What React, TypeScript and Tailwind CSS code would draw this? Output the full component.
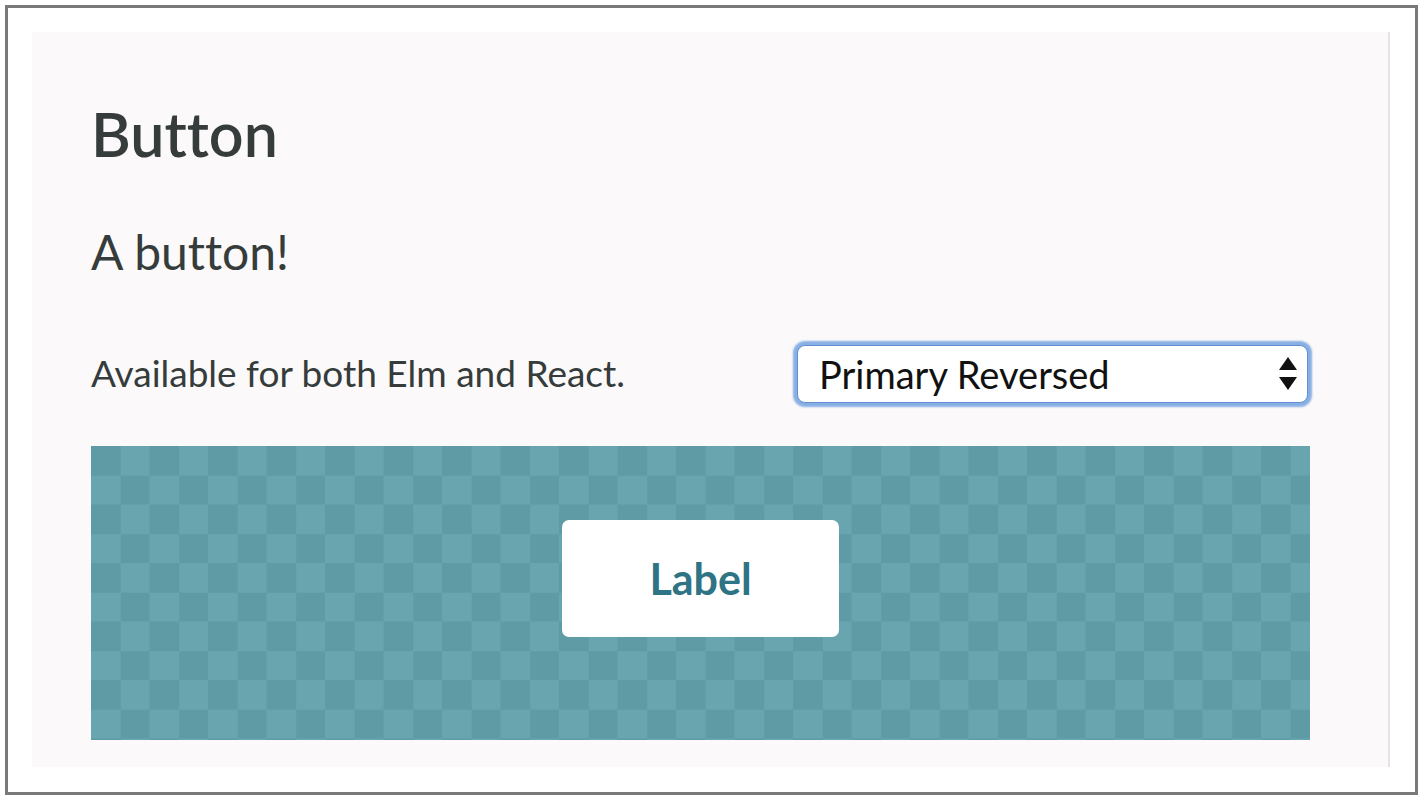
import React from "react";

const FONT = "font-['Lato','Noto_Sans',sans-serif] [font-variant-ligatures:none]";

function SelectArrows() {
  return (
    <svg width="18" height="34" viewBox="0 0 18 34" className="shrink-0">
      <path d="M9 0 L18 13 L0 13 Z" fill="#111" />
      <path d="M0 20 L18 20 L9 33 Z" fill="#111" />
    </svg>
  );
}

function VariantSelect({ value }: { value: string }) {
  return (
    <div className="flex h-[58px] w-[511px] items-center justify-between rounded-[8px] border border-[#5f8fd0] bg-white pl-[21px] pr-[10px] shadow-[0_0_2px_4px_rgba(115,162,225,0.85)]">
      <span className={`${FONT} text-[38px] leading-none text-[#111]`}>{value}</span>
      <SelectArrows />
    </div>
  );
}

export default function App() {
  return (
    <div className="h-[801px] w-[1425px] bg-white pl-[5px] pt-[5px]">
      <div className="h-[790px] w-[1413px] border-[3px] border-[#797979] bg-white pb-[25px] pl-[24px] pr-[25px] pt-[24px]">
        <div className="h-full border-r-2 border-[#e6e3e3] bg-[#fbf9f9] pl-[59px] pr-[78px] pt-[71px]">
          <h1 className={`${FONT} text-[61px] font-semibold leading-none text-[#353c3b]`}>Button</h1>

          <p className={`${FONT} mt-[64px] text-[48px] leading-none text-[#353c3b]`}>A button!</p>

          <div className="mt-[69px] flex items-center justify-between pr-[2px]">
            <p className={`${FONT} pb-[3px] text-[37px] leading-none text-[#353c3b]`}>Available for both Elm and React.</p>
            <VariantSelect value="Primary Reversed" />
          </div>

          <div className="mt-[43px] flex h-[294px] justify-center bg-[image:conic-gradient(#69a5af_25%,#5f9ba5_0_50%,#69a5af_0_75%,#5f9ba5_0)] bg-[length:58.5px_58.5px] pt-[74px]">
            <button
              type="button"
              className={`${FONT} flex h-[117px] w-[277px] items-center justify-center rounded-[7px] bg-white text-[43px] font-bold leading-none text-[#2e7484]`}
            >
              Label
            </button>
          </div>
        </div>
      </div>
    </div>
  );
}
